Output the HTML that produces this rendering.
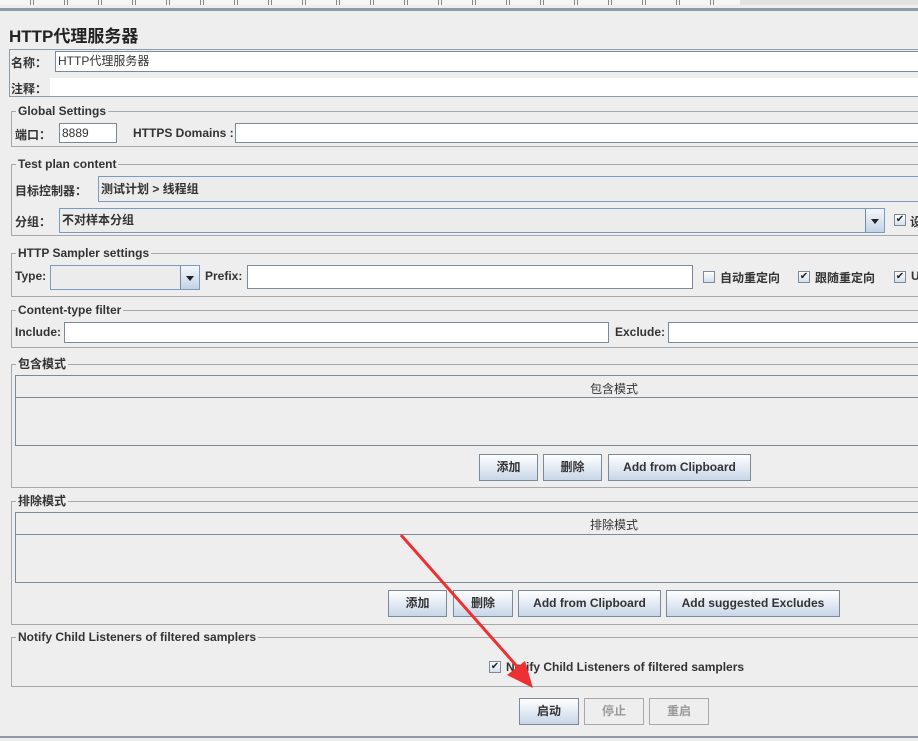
<!DOCTYPE html>
<html><head><meta charset="utf-8"><style>
*{margin:0;padding:0;box-sizing:border-box}
body{width:918px;height:741px;background:#eeeeee;position:relative;overflow:hidden;font-family:"Liberation Sans","Noto Sans CJK SC",sans-serif;font-size:12px;color:#333}
div,span{position:absolute}
.b{font-weight:bold}
.fs{border:1px solid #a8a8a8;border-right:none}
.lg{background:#eeeeee;padding:0 2px;font-weight:bold;line-height:14px;top:-8px;left:4px}
.in{background:#fff;border:1px solid #7a8a99;border-right:none}
.btn{border:1px solid #7a8a99;background:linear-gradient(#ffffff,#c8d6e8);font-weight:bold;text-align:center;line-height:25px;height:27px}
.dis{border:1px solid #a8a8a8;background:#eeeeee;color:#999;font-weight:bold;text-align:center;line-height:25px;height:27px}
.cb{width:12px;height:12px;border:1px solid #7a8a99;background:linear-gradient(#fff,#d4dfec);font-size:10px;line-height:10px;text-align:center;color:#222}
.arr{background:linear-gradient(#f4f7fb,#c3d3e6);border-left:1px solid #7a8a99}
.arr:after{content:"";position:absolute;left:5px;top:10px;border:4px solid transparent;border-top:5px solid #222;border-bottom:none}
.tb{border:1px solid #7a8a99;border-right:none}
</style></head><body>
<!-- toolbar remnants -->
<div style="left:0;top:0;width:918px;height:5px;background:#e2e2e2"></div>
<div style="left:0;top:0;width:740px;height:5px;background:repeating-linear-gradient(90deg,#f6f6f6 0 30px,#888 30px 31px,#f6f6f6 31px 33px,#888 33px 34px)"></div>
<div style="left:0;top:8px;width:918px;height:3px;background:#8d9aa8"></div>
<div style="left:9px;top:22px;font-size:17px;font-weight:bold;color:#222">HTTP代理服务器</div>

<div style="left:9px;top:49px;width:909px;height:48px;border:1px solid #8d9aa8;border-right:none"></div>
<div class="b" style="left:11px;top:54px">名称：</div>
<div class="in" style="left:55px;top:51px;width:863px;height:21px;padding:2px 2px;line-height:15px">HTTP代理服务器</div>
<div class="b" style="left:11px;top:80px">注释：</div>
<div style="left:50px;top:78px;width:868px;height:18px;background:#fff"></div>

<div class="fs" style="left:11px;top:111px;width:907px;height:36px"><span class="lg">Global Settings</span></div>
<div class="b" style="left:15px;top:126px">端口：</div>
<div class="in" style="left:59px;top:123px;width:58px;height:20px;border-right:1px solid #7a8a99;padding:2px 2px;line-height:15px">8889</div>
<div class="b" style="left:133px;top:126px">HTTPS Domains :</div>
<div class="in" style="left:235px;top:123px;width:683px;height:20px"></div>

<div class="fs" style="left:11px;top:164px;width:907px;height:72px"><span class="lg">Test plan content</span></div>
<div class="b" style="left:15px;top:182px">目标控制器：</div>
<div style="left:98px;top:176px;width:820px;height:26px;border:1px solid #7a9bbd;border-right:none;background:#ececec;padding:4px 2px;font-weight:bold;line-height:16px">测试计划 &gt; 线程组</div>
<div class="b" style="left:15px;top:213px">分组：</div>
<div style="left:59px;top:208px;width:826px;height:25px;border:1px solid #7a9bbd;background:#ececec;padding:3px 2px;font-weight:bold;line-height:17px">不对样本分组</div>
<div class="arr" style="left:865px;top:209px;width:19px;height:23px"></div>
<div class="cb" style="left:894px;top:214px">✔</div>
<div class="b" style="left:910px;top:213px">设</div>

<div class="fs" style="left:11px;top:253px;width:907px;height:44px"><span class="lg">HTTP Sampler settings</span></div>
<div class="b" style="left:15px;top:269px">Type:</div>
<div style="left:50px;top:265px;width:150px;height:25px;border:1px solid #7a9bbd;background:#ececec"></div>
<div class="arr" style="left:180px;top:266px;width:19px;height:23px"></div>
<div class="b" style="left:205px;top:269px">Prefix:</div>
<div class="in" style="left:247px;top:265px;width:446px;height:24px;border-right:1px solid #7a8a99"></div>
<div class="cb" style="left:703px;top:271px"></div>
<div class="b" style="left:720px;top:269px">自动重定向</div>
<div class="cb" style="left:798px;top:271px">✔</div>
<div class="b" style="left:815px;top:269px">跟随重定向</div>
<div class="cb" style="left:894px;top:271px">✔</div>
<div class="b" style="left:911px;top:269px">U</div>

<div class="fs" style="left:11px;top:310px;width:907px;height:38px"><span class="lg">Content-type filter</span></div>
<div class="b" style="left:15px;top:325px">Include:</div>
<div class="in" style="left:64px;top:322px;width:545px;height:21px;border-right:1px solid #7a8a99"></div>
<div class="b" style="left:615px;top:325px">Exclude:</div>
<div class="in" style="left:668px;top:322px;width:250px;height:21px"></div>

<div class="fs" style="left:11px;top:364px;width:907px;height:124px"><span class="lg">包含模式</span></div>
<div class="tb" style="left:15px;top:375px;width:903px;height:71px"></div>
<div style="left:16px;top:397px;width:902px;height:1px;background:#7a8a99"></div>
<div style="left:590px;top:380px">包含模式</div>
<div class="btn" style="left:479px;top:454px;width:59px">添加</div>
<div class="btn" style="left:543px;top:454px;width:59px">删除</div>
<div class="btn" style="left:608px;top:454px;width:143px">Add from Clipboard</div>

<div class="fs" style="left:11px;top:501px;width:907px;height:124px"><span class="lg">排除模式</span></div>
<div class="tb" style="left:15px;top:512px;width:903px;height:71px"></div>
<div style="left:16px;top:534px;width:902px;height:1px;background:#7a8a99"></div>
<div style="left:590px;top:516px">排除模式</div>
<div class="btn" style="left:388px;top:590px;width:59px">添加</div>
<div class="btn" style="left:453px;top:590px;width:60px">删除</div>
<div class="btn" style="left:518px;top:590px;width:143px">Add from Clipboard</div>
<div class="btn" style="left:666px;top:590px;width:174px">Add suggested Excludes</div>

<div class="fs" style="left:11px;top:637px;width:907px;height:50px"><span class="lg">Notify Child Listeners of filtered samplers</span></div>
<div class="cb" style="left:489px;top:661px">✔</div>
<div class="b" style="left:506px;top:660px">Notify Child Listeners of filtered samplers</div>

<div class="btn" style="left:519px;top:698px;width:60px">启动</div>
<div class="dis" style="left:584px;top:698px;width:60px">停止</div>
<div class="dis" style="left:649px;top:698px;width:60px">重启</div>
<div style="left:0;top:736px;width:918px;height:2px;background:#8d9aa8"></div>

<svg style="position:absolute;left:0;top:0" width="918" height="741">
<line x1="401" y1="535" x2="522" y2="672" stroke="#ee3030" stroke-width="3"/>
<polygon points="533,688 507,675 525,661" fill="#ee3030"/>
</svg>
</body></html>
